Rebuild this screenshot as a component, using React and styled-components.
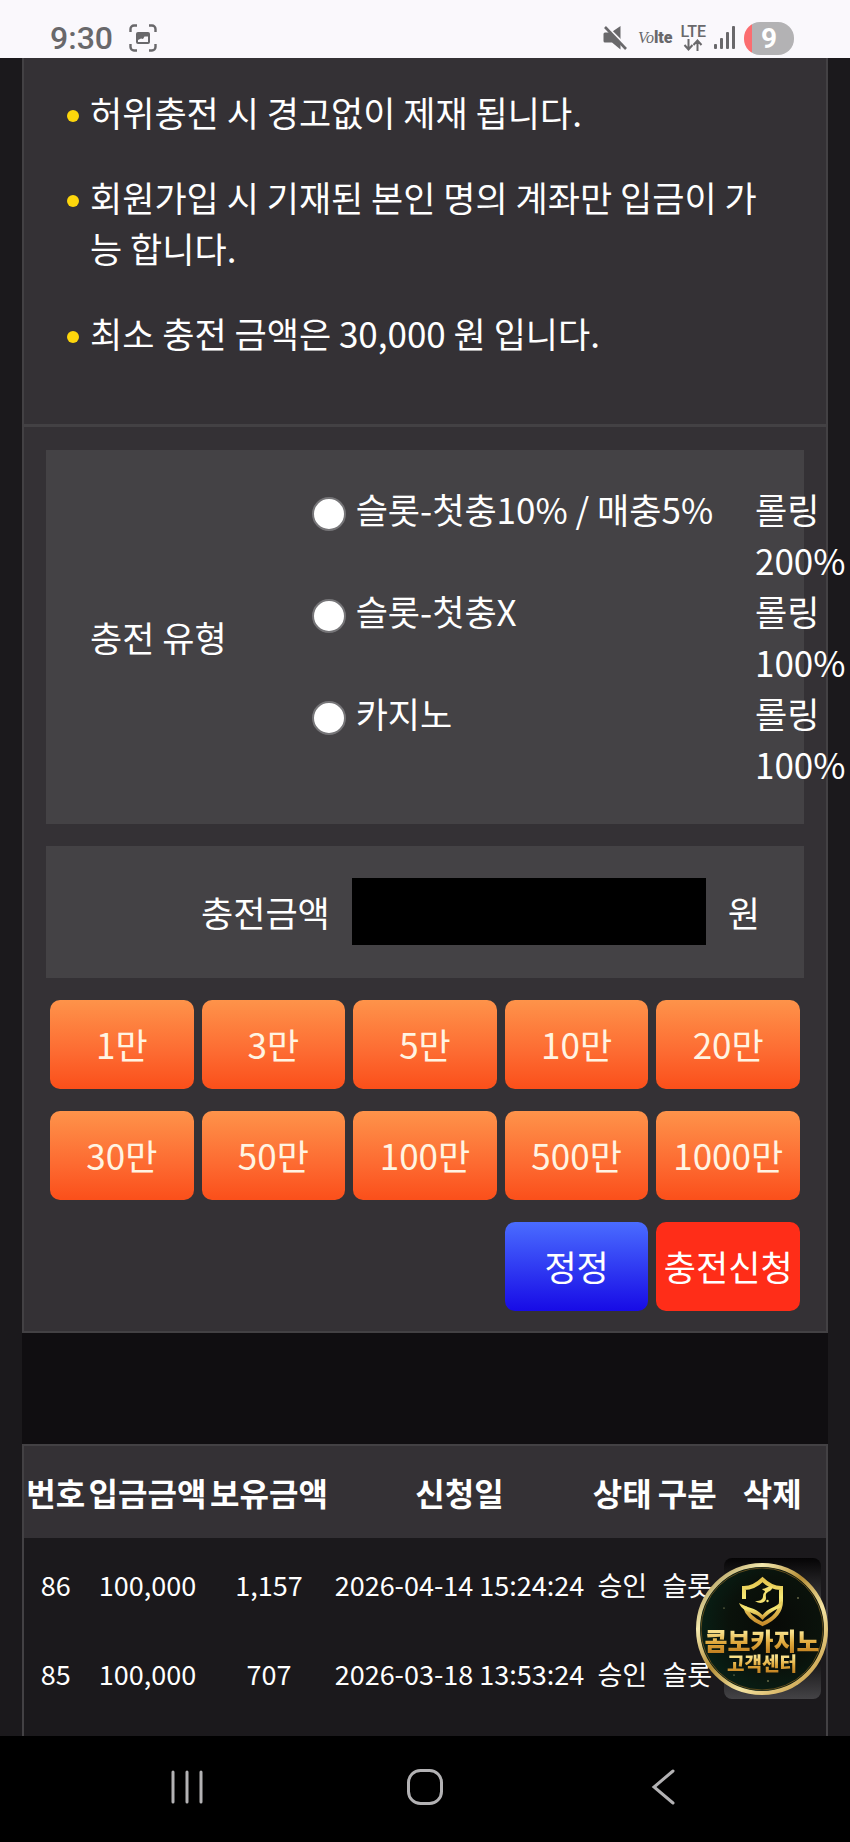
import React, { useState } from 'react';
import styled, { createGlobalStyle } from 'styled-components';

const notices = [
  '허위충전 시 경고없이 제재 됩니다.',
  '회원가입 시 기재된 본인 명의 계좌만 입금이 가능 합니다.',
  '최소 충전 금액은 30,000 원 입니다.',
];

const chargeTypes = [
  { id: 'slot-first', name: '슬롯-첫충10% / 매충5%', rolling: '롤링 200%' },
  { id: 'slot-none', name: '슬롯-첫충X', rolling: '롤링 100%' },
  { id: 'casino', name: '카지노', rolling: '롤링 100%' },
];

const amounts = [1, 3, 5, 10, 20, 30, 50, 100, 500, 1000];

const columns = [
  { title: '번호', width: 7.9 },
  { title: '입금금액', width: 15 },
  { title: '보유금액', width: 15.3 },
  { title: '신청일', width: 32.2 },
  { title: '상태', width: 8.4 },
  { title: '구분', width: 7.8 },
  { title: '삭제', width: 13.4 },
];

const history = [
  { no: 86, deposit: '100,000', balance: '1,157', date: '2026-04-14 15:24:24' },
  { no: 85, deposit: '100,000', balance: '707', date: '2026-03-18 13:53:24' },
];

function StatusBar() {
  return (
    <Status>
      <StatusGroup>
        <Clock>9:30</Clock>
        <svg width='28' height='28' viewBox='0 0 28 28' fill='none'>
          <path
            d='M1.500 8V5a3.500 3.500 0 0 1 3.500-3.500h3M20 1.500h3A3.500 3.500 0 0 1 26.500 5v3M26.500 20v3a3.500 3.500 0 0 1-3.500 3.500h-3M8 26.500H5A3.500 3.500 0 0 1 1.500 23v-3'
            stroke='#69686b'
            strokeWidth='2.400'
          />
          <rect x='7' y='8' width='14' height='12' rx='2' fill='#69686b' />
          <path d='M9 18v-2l3-1.500 2 .5 1.500-2.500h3.500V18z' fill='#faf8fc' />
        </svg>
      </StatusGroup>
      <StatusGroup>
        <svg width='24' height='24' viewBox='0 0 24 24'>
          <path d='M2 6.500h6L17.500 0v23.500L9 16.500H2A1.500 1.500 0 0 1 .5 15V8A1.500 1.500 0 0 1 2 6.500z' fill='#69686b' />
          <path d='M2-1l24 24' stroke='#faf8fc' strokeWidth='2.500' />
          <path d='M2 1l21 22' stroke='#69686b' strokeWidth='2.600' />
        </svg>
        <Volte>
          <i>Vo</i>
          <b>lte</b>
        </Volte>
        <Network>
          LTE
          <svg width='20' height='12' viewBox='0 0 20 12' fill='none' stroke='#69686b' strokeWidth='2'>
            <path d='M5.500 0v10M1.500 6l4 4.500 4-4.500M14.500 12V2M10.500 6l4-4.500 4 4.500' />
          </svg>
        </Network>
        <svg width='22' height='24' viewBox='0 0 22 24' fill='#69686b'>
          <rect x='0' y='18' width='3' height='5' rx='1' />
          <rect x='6' y='12' width='3' height='11' rx='1' />
          <rect x='12' y='6' width='3' height='17' rx='1' />
          <rect x='18' y='0' width='3' height='23' rx='1' />
        </svg>
        <Battery>9</Battery>
      </StatusGroup>
    </Status>
  );
}

function SupportBadge() {
  return (
    <Badge href='#support'>
      <BadgeArt viewBox='0 0 132 132'>
        <defs>
          <linearGradient id='ring' x1='0' y1='0' x2='1' y2='1'>
            <stop offset='0' stopColor='#8d7434' />
            <stop offset='0.25' stopColor='#f4e9ae' />
            <stop offset='0.45' stopColor='#b48c35' />
            <stop offset='0.65' stopColor='#f3e3a2' />
            <stop offset='1' stopColor='#bd8a2c' />
          </linearGradient>
          <radialGradient id='felt' cx='0.6' cy='0.45' r='0.6'>
            <stop offset='0' stopColor='#080a07' />
            <stop offset='0.6' stopColor='#0a120b' />
            <stop offset='1' stopColor='#082016' />
          </radialGradient>
          <linearGradient id='shield' x1='0' y1='0' x2='0' y2='1'>
            <stop offset='0' stopColor='#e3c34d' />
            <stop offset='0.4' stopColor='#f6ea76' />
            <stop offset='1' stopColor='#c88b2a' />
          </linearGradient>
        </defs>
        <circle cx='66' cy='66' r='64' fill='url(#felt)' stroke='url(#ring)' strokeWidth='4' />
        <circle cx='66' cy='66' r='61' fill='none' stroke='#5d4a1c' strokeWidth='1' />
        <path
          d='M48 36V25c7 0 13-3 18.500-8.500C72 22 78 25 85 25v13c0 10-7 18-18.500 23C57 57 51 51 49 44'
          fill='none'
          stroke='url(#shield)'
          strokeWidth='4'
        />
        <path
          d='M43 40c8 5 16 4 23.500 12C72 45 79 45 86 38l-1 6c-6 3-12 6-18.500 13C61 50 55 51 49 47c-3-2-5-4-6-7z'
          fill='url(#shield)'
        />
        <path
          d='M77 23c-6 0-7 3-11 3 0 1 3 1 3 3-3 2-1 5-3 7-2 2-4 2-7 2 6 4 11 1 11-3 0-3-1-4 2-6 2-1 4-2 5-6z'
          fill='#f2df70'
        />
        <circle cx='71.500' cy='38' r='1.200' fill='#f6ea76' />
        <g fill='#c9c489'>
          <circle cx='28' cy='45' r='0.600' />
          <circle cx='102' cy='35' r='0.700' />
          <circle cx='38' cy='112' r='0.600' />
          <circle cx='101' cy='121' r='0.600' />
          <circle cx='72' cy='118' r='0.700' />
        </g>
      </BadgeArt>
      <BadgeTitle>콤보카지노</BadgeTitle>
      <BadgeSubtitle>고객센터</BadgeSubtitle>
    </Badge>
  );
}

function App() {
  const [type, setType] = useState('');
  const [amount, setAmount] = useState('');

  return (
    <>
      <GlobalStyle />
      <Page>
        <StatusBar />
        <Content>
          <Notices>
            {notices.map((notice) => (
              <Notice key={notice}>{notice}</Notice>
            ))}
          </Notices>

          <ChargeForm onSubmit={(e) => e.preventDefault()}>
            <TypeBox role='radiogroup' aria-labelledby='type-label'>
              <TypeLabel id='type-label'>충전 유형</TypeLabel>
              {chargeTypes.map(({ id, name, rolling }) => (
                <React.Fragment key={id}>
                  <TypeOption htmlFor={id}>
                    <Radio
                      id={id}
                      name='type'
                      checked={type === id}
                      onChange={() => setType(id)}
                    />
                    {name}
                  </TypeOption>
                  <Rolling>{rolling}</Rolling>
                </React.Fragment>
              ))}
            </TypeBox>

            <AmountBox>
              <AmountLabel htmlFor='amount'>충전금액</AmountLabel>
              <AmountInput
                id='amount'
                value={amount}
                onChange={(e) => setAmount(e.target.value)}
              />
              <span>원</span>
            </AmountBox>

            <ButtonGrid>
              {amounts.map((n) => (
                <Button
                  key={n}
                  type='button'
                  onClick={() => setAmount(String(Number(amount) + n * 10000))}>
                  {n}만
                </Button>
              ))}
              <ResetButton type='button' onClick={() => setAmount('')}>
                정정
              </ResetButton>
              <SubmitButton type='submit'>충전신청</SubmitButton>
            </ButtonGrid>
          </ChargeForm>

          <Divider />

          <History>
            <Table>
              <colgroup>
                {columns.map(({ title, width }) => (
                  <Col key={title} $width={width} />
                ))}
              </colgroup>
              <thead>
                <tr>
                  {columns.map(({ title }) => (
                    <HeadCell key={title}>{title}</HeadCell>
                  ))}
                </tr>
              </thead>
              <tbody>
                {history.map(({ no, deposit, balance, date }) => (
                  <tr key={no}>
                    <Cell>{no}</Cell>
                    <Cell>{deposit}</Cell>
                    <Cell>{balance}</Cell>
                    <Cell>{date}</Cell>
                    <Cell>승인</Cell>
                    <Cell>슬롯</Cell>
                    <Cell>
                      <DeleteButton type='button' aria-label='삭제' />
                    </Cell>
                  </tr>
                ))}
              </tbody>
            </Table>
          </History>
        </Content>

        <SupportBadge />

        <NavBar>
          <NavButton aria-label='최근 앱'>
            <svg
              width='36'
              height='40'
              viewBox='0 0 36 40'
              stroke='#b3b2b4'
              strokeWidth='3'
              strokeLinecap='round'>
              <path d='M4 5v30M18 5v30M32 5v30' />
            </svg>
          </NavButton>
          <NavButton aria-label='홈'>
            <svg width='40' height='40' viewBox='0 0 40 40' fill='none' stroke='#b3b2b4' strokeWidth='3'>
              <rect x='3.500' y='3.500' width='33' height='33' rx='12' />
            </svg>
          </NavButton>
          <NavButton aria-label='뒤로'>
            <svg
              width='40'
              height='40'
              viewBox='0 0 40 40'
              fill='none'
              stroke='#b3b2b4'
              strokeWidth='3'
              strokeLinecap='round'>
              <path d='M30 4L11 20l19 16' />
            </svg>
          </NavButton>
        </NavBar>
      </Page>
    </>
  );
}

export default App;

const GlobalStyle = createGlobalStyle`
  * {
    box-sizing: border-box;
  }

  body {
    margin: 0;
    background: #1b191c;
    color: #fff;
    font-family: 'Noto Sans CJK KR', sans-serif;
    font-size: 35px;
    line-height: 51px;
  }

  button,
  input {
    font: inherit;
    color: inherit;
    border: 0;
    padding: 0;
    margin: 0;
  }
`;

const Page = styled.div`
  display: flex;
  flex-direction: column;
  min-height: 100vh;
`;

const Status = styled.header`
  display: flex;
  justify-content: space-between;
  align-items: center;
  height: 58px;
  padding: 18px 56px 0 50px;
  background: #faf8fc;
  color: #69686b;
  font-family: Roboto, sans-serif;
  line-height: 32px;
`;

const StatusGroup = styled.div`
  display: flex;
  align-items: center;
  gap: 8px;
`;

const Clock = styled.span`
  margin-right: 8px;
  font-size: 32px;
  font-weight: 500;
`;

const Volte = styled.span`
  margin-left: 3px;
  font-size: 16px;

  i {
    font-family: 'Liberation Serif', serif;
  }

  b {
    font-weight: 900;
  }
`;

const Network = styled.span`
  display: flex;
  flex-direction: column;
  align-items: center;
  font-size: 16px;
  font-weight: 500;
  line-height: 14px;
`;

const Battery = styled.span`
  width: 50px;
  height: 33px;
  border-radius: 16px;
  background: linear-gradient(90deg, #fb6d70 8px, #b3b2b4 8px);
  color: #fff;
  font-size: 28px;
  font-weight: 700;
  line-height: 33px;
  text-align: center;
`;

const Content = styled.main`
  display: flex;
  flex: 1;
  flex-direction: column;
  margin: 0 22px;
`;

const Notices = styled.ul`
  display: flex;
  flex-direction: column;
  gap: 34px;
  margin: 0;
  padding: 28px 52px 66px 66px;
  border: 2px solid #434144;
  border-width: 0 2px;
  background: #343135;
  list-style: none;
`;

const Notice = styled.li`
  position: relative;
  word-break: break-all;

  &::before {
    content: '';
    position: absolute;
    top: 24px;
    left: -23px;
    width: 12px;
    height: 12px;
    border-radius: 50%;
    background: #fdd60c;
  }
`;

const ChargeForm = styled.form`
  display: flex;
  flex-direction: column;
  gap: 22px;
  padding: 23px 22px 20px;
  border: 2px solid #434144;
  border-top-width: 3px;
  background: #343135;
`;

const TypeBox = styled.div`
  display: grid;
  grid-template-columns: minmax(0, 1fr) minmax(0, 2fr) 0;
  padding: 33px 49px 35px 44px;
  background: #444245;
`;

const TypeLabel = styled.div`
  grid-row: span 3;
  align-self: center;
`;

const TypeOption = styled.label`
  display: flex;
  align-items: flex-start;
  gap: 10px;
`;

const Radio = styled.input.attrs({ type: 'radio' })`
  appearance: none;
  width: 34px;
  height: 34px;
  margin-top: 14px;
  border: 2px solid #767578;
  border-radius: 50%;
  background: #fff;

  &:checked {
    background: radial-gradient(#0075ff 50%, #fff 55%);
  }
`;

const Rolling = styled.span`
  width: min-content;
`;

const AmountBox = styled.div`
  display: grid;
  grid-template-columns: minmax(0, 21fr) minmax(0, 31fr) auto;
  align-items: center;
  gap: 22px;
  padding: 32px 44px 33px;
  background: #444245;
`;

const AmountLabel = styled.label`
  text-align: right;
`;

const AmountInput = styled.input`
  min-width: 0;
  height: 67px;
  padding: 0 16px;
  background: #000;
`;

const ButtonGrid = styled.div`
  display: grid;
  grid-template-columns: repeat(5, minmax(0, 1fr));
  gap: 22px 8px;
  padding: 0 4px;
`;

const Button = styled.button`
  height: 89px;
  padding-bottom: 2px;
  border-radius: 10px;
  background: linear-gradient(#fe934a, #fd6a31 60%, #fb4f1a);
  color: #fff4e2;
  white-space: nowrap;
  cursor: pointer;
`;

const ResetButton = styled(Button)`
  grid-column: 4;
  background: linear-gradient(#4a6cff, #170be6);
  color: #fff;
`;

const SubmitButton = styled(Button)`
  background: #ff2d18;
  color: #fff;
`;

const Divider = styled.div`
  height: 111px;
  background: #100e11;
`;

const History = styled.section`
  flex: 1;
  border: 2px solid #434144;
  border-bottom: 0;
`;

const Table = styled.table`
  width: 100%;
  table-layout: fixed;
  border-collapse: collapse;
  text-align: center;
  white-space: nowrap;
`;

const Col = styled.col`
  width: ${({ $width }) => $width}%;
`;

const HeadCell = styled.th`
  height: 92px;
  padding: 0;
  background: #343135;
  font-size: 32px;
  font-weight: 700;
`;

const Cell = styled.td`
  height: 89px;
  padding: 3px 0 0;
  font-size: 27px;
`;

const DeleteButton = styled.button`
  display: block;
  width: 97px;
  height: 52px;
  margin: 0 auto;
  border-radius: 8px;
  background: linear-gradient(#050405, #444346);
`;

const Badge = styled.a`
  position: fixed;
  right: 22px;
  bottom: 147px;
  display: flex;
  flex-direction: column;
  align-items: center;
  width: 132px;
  height: 132px;
  padding-top: 64px;
  font-weight: 900;
  text-decoration: none;
`;

const BadgeArt = styled.svg`
  position: absolute;
  inset: 0;
`;

const BadgeTitle = styled.span`
  position: relative;
  background: linear-gradient(#f8e08a 20%, #e0a93c 60%, #c07f20);
  background-clip: text;
  color: transparent;
  font-size: 25px;
  line-height: 26px;
`;

const BadgeSubtitle = styled(BadgeTitle)`
  font-size: 19px;
  line-height: 20px;
`;

const NavBar = styled.nav`
  display: grid;
  grid-template-columns: repeat(3, 1fr);
  height: 106px;
  padding: 0 8% 4px;
  background: #000;
`;

const NavButton = styled.button`
  display: flex;
  justify-content: center;
  align-items: center;
  background: none;
`;
